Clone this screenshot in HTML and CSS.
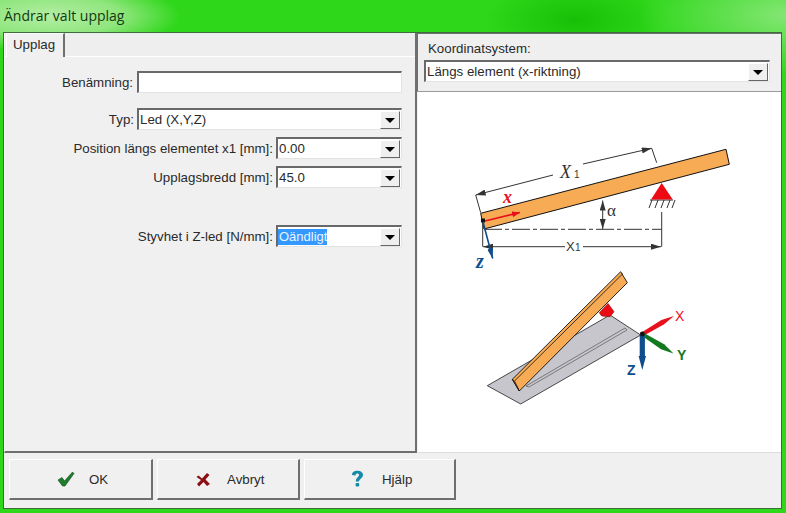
FILE: index.html
```html
<!DOCTYPE html>
<html lang="sv">
<head>
  <meta charset="utf-8" />
  <title>Ändrar valt upplag</title>
  <link rel="stylesheet" href="styles.css">
</head>
<body>
  <div class="window">
    <div class="titlebar">Ändrar valt upplag</div>
    <div class="client">
      <div class="panes">
        <div class="left">
          <div class="tabstrip"><div class="tab">Upplag</div></div>
          <div class="tabpage">
            <div class="row row-name">
              <label>Benämning:</label>
              <div class="field wide"></div>
            </div>
            <div class="row row-type">
              <label>Typ:</label>
              <div class="field wide combo"><span>Led (X,Y,Z)</span><b class="drop"></b></div>
            </div>
            <div class="row row-next">
              <label>Position längs elementet x1 [mm]:</label>
              <div class="field short combo"><span>0.00</span><b class="drop"></b></div>
            </div>
            <div class="row row-next">
              <label>Upplagsbredd [mm]:</label>
              <div class="field short combo"><span>45.0</span><b class="drop"></b></div>
            </div>
            <div class="row row-stiff">
              <label>Styvhet i Z-led [N/mm]:</label>
              <div class="field short combo"><span class="selected">Oändligt</span><b class="drop"></b></div>
            </div>
          </div>
        </div>
        <div class="right">
          <div class="coords">
            <div class="coords-label">Koordinatsystem:</div>
            <div class="field combo"><span>Längs element (x-riktning)</span><b class="drop"></b></div>
          </div>
          <div class="picture">
            <svg class="diagram" viewBox="418 92 363 361" width="363" height="361">
              <defs>
                <marker id="ah" viewBox="0 0 10 6" refX="10" refY="3" markerWidth="10" markerHeight="6" orient="auto-start-reverse" markerUnits="userSpaceOnUse">
                  <path d="M0 0L10 3L0 6z" fill="#333"/>
                </marker>
                <marker id="ar" viewBox="0 0 8 6" refX="8" refY="3" markerWidth="8" markerHeight="6" orient="auto" markerUnits="userSpaceOnUse">
                  <path d="M0 0L8 3L0 6z" fill="#e8101c"/>
                </marker>
                <marker id="ab" viewBox="0 0 10 6" refX="10" refY="3" markerWidth="10" markerHeight="6" orient="auto" markerUnits="userSpaceOnUse">
                  <path d="M0 0L10 3L0 6z" fill="#0f4d8c"/>
                </marker>
              </defs>

              <!-- upper sketch -->
              <polygon points="480.7,213.3 726,149.3 729.3,164.3 484,229" fill="#f7ab55" stroke="#111" stroke-width="1"/>
              <g stroke="#333" stroke-width="1" fill="none">
                <path d="M475.7 195L480.7 212.7M651.7 148.3L656.7 162.7"/>
                <path d="M553 175L475.7 195" marker-end="url(#ah)"/>
                <path d="M583 164L651.7 148.3" marker-end="url(#ah)"/>
                <path d="M482.7 222V246.7M661.7 212V246.7"/>
                <path d="M484 229.3H661.7" stroke-dasharray="18 3 4 3"/>
                <path d="M565 246.7H483" marker-end="url(#ah)"/>
                <path d="M583 246.7H661" marker-end="url(#ah)"/>
                <path d="M602.7 215V200.5" marker-end="url(#ah)"/>
                <path d="M602.7 215V229" marker-end="url(#ah)"/>
                <path d="M650 200H673M652 200L649 208M658 200L655 208M664 200L661 208M670 200L667 208M675 200L672 208"/>
              </g>
              <polygon points="661.7,183 651,199.5 672.7,199.5" fill="#ee0a12"/>
              <path d="M485 221L520 212.5" stroke="#e8101c" stroke-width="1.6" marker-end="url(#ar)"/>
              <rect x="481" y="218.5" width="4" height="4" fill="#111"/>
              <path d="M483 222L492.7 258.5" stroke="#0f4d8c" stroke-width="1.6" marker-end="url(#ab)"/>
              <text class="t-serif-x" x="560" y="178">X</text>
              <text class="t-sub" x="574" y="178">1</text>
              <text class="t-x" x="503" y="203">x</text>
              <text class="t-z" x="476" y="268">z</text>
              <text class="t-alpha" x="607" y="216">α</text>
              <text class="t-dim" x="566" y="251">X</text>
              <text class="t-sub" x="575" y="251">1</text>

              <!-- lower sketch -->
              <polygon points="487.3,385.7 610,315 640.7,335 520.7,404" fill="#c6c6cc" stroke="#222" stroke-width="0.8"/>
              <polygon points="526,386 625,328 627,330 529,387" fill="#c6c6cc" stroke="#666" stroke-width="0.8"/>
              <polygon points="599.3,312.7 608,303.5 614,311.7 610,316.7 601.7,316" fill="#ee0a12" stroke="#7a0a0a" stroke-width="0.6"/>
              <polygon points="512.3,379.3 620.7,271.7 627.3,282.7 519.3,391" fill="#f7ab55" stroke="#111" stroke-width="0.9"/>
              <path d="M514.5 381L623 273.5" stroke="#111" stroke-width="0.8"/>
              <polygon points="512.3,379.3 514.5,381 519.3,391" fill="#c9822f" stroke="#111" stroke-width="0.8"/>
              <polygon points="643,336 641.5,332.5 661.4,320.1 674,316 663.8,324.5" fill="#e8101c"/>
              <polygon points="641.5,335.5 643,332.5 664.2,344.2 673.5,353.5 661,349.2" fill="#127a1e"/>
              <polygon points="639.7,335 644.9,335 644.9,356 646,356 642.3,370 638.6,356 639.7,356" fill="#0f4d8c"/>
              <circle cx="642.3" cy="334" r="2.4" fill="#111"/>
              <text class="t-axis t-red" x="675" y="321">X</text>
              <text class="t-axis t-green" x="677" y="360">Y</text>
              <text class="t-axis t-blue" x="627" y="375">Z</text>
            </svg>
          </div>
        </div>
      </div>
      <div class="footer">
        <button class="btn btn-ok" type="button">
          <svg width="18" height="16" viewBox="0 0 18 16"><path d="M1 9L5 6.5L7.5 10L15.5 1L17 2.5L8 15H5.5z" fill="#1d7d2c" stroke="#0e4a18" stroke-width="0.6"/></svg>
          <span>OK</span>
        </button>
        <button class="btn btn-cancel" type="button">
          <svg width="15" height="15" viewBox="0 0 15 15"><path d="M2.5 3.5L6 6.5L11 1L13.5 3L9.5 7.5L14 12L11 14L7.5 10L3 14.5L1 12L5 8L0.5 5z" fill="#8c0f14"/></svg>
          <span>Avbryt</span>
        </button>
        <button class="btn btn-help" type="button">
          <svg width="13" height="18" viewBox="0 0 13 18"><path d="M1 5C1 2 3.5 0.8 6.5 0.8C10 0.8 12 2.6 12 5C12 8 8.5 8.5 8 11.5H4.8C4.8 7.5 8 7 8 5C8 4 7.4 3.5 6.3 3.5C5 3.5 4.6 4.3 4.6 5.5z" fill="#118ba8"/><rect x="4.6" y="13" width="3.6" height="3.6" rx="1" fill="#118ba8"/></svg>
          <span>Hjälp</span>
        </button>
      </div>
    </div>
  </div>
</body>
</html>
```

FILE: styles.css
```css
* {
  margin: 0;
  padding: 0;
  box-sizing: border-box;
}

html, body {
  width: 786px;
  height: 513px;
  overflow: hidden;
}

body {
  font-family: "Liberation Sans", Arial, sans-serif;
  font-size: 13.3px;
  color: #2a2a2a;
  background:
    radial-gradient(ellipse 130px 36px at 50px 16px, #b4eda4 0%, #8fe67d 55%, rgba(70, 220, 40, 0) 100%),
    radial-gradient(ellipse 150px 60px at 790px 15px, #86e676 0%, rgba(100, 225, 80, 0) 100%),
    radial-gradient(ellipse 90px 40px at 575px 20px, #17c006 0%, rgba(23, 192, 6, 0) 100%),
    #2fd71b;
}

.window {
  width: 786px;
  height: 513px;
  padding-left: 3px;
  padding-right: 4px;
  padding-bottom: 4px;
  display: flex;
  flex-direction: column;
}

.titlebar {
  height: 32px;
  flex: none;
  padding: 7px 0 0 1px;
  font-family: "Open Sans", sans-serif;
  font-size: 14px;
  line-height: 18px;
  color: #123a10;
}

.client {
  flex: 1;
  display: flex;
  flex-direction: column;
  background: #f0f0f0;
  border: 1px solid #3f6b3a;
}

.panes {
  display: flex;
  height: 420px;
  flex: none;
}

.left {
  width: 413px;
  flex: none;
  display: flex;
  flex-direction: column;
  border-right: 2px solid #6f6f6f;
  border-bottom: 2px solid #6f6f6f;
  border-left: 1px solid #ffffff;
}

.tabstrip {
  height: 24px;
  flex: none;
  padding-left: 1px;
  background: #eeeeee;
  border-bottom: 1px solid #ffffff;
}

.tab {
  width: 59px;
  height: 24px;
  padding: 3px 0 0 6px;
  background: #f0f0f0;
  border-top: 1px solid #ffffff;
  border-left: 1px solid #ffffff;
  border-right: 2px solid #6f6f6f;
  line-height: 15px;
}

.tabpage {
  flex: 1;
  padding-top: 14px;
  padding-right: 13px;
}

.row {
  display: flex;
  justify-content: flex-end;
  align-items: center;
  height: 22px;
  gap: 3px;
}

.row label {
  white-space: nowrap;
  padding-top: 1px;
}

.row-name {
  gap: 4px;
}

.row-type {
  margin-top: 15px;
}

.row-next {
  margin-top: 7px;
}

.row-stiff {
  margin-top: 37px;
}

.field {
  height: 22px;
  background: #ffffff;
  border-top: 2px solid #696969;
  border-left: 2px solid #696969;
  border-right: 1px solid #e3e3e3;
  border-bottom: 1px solid #e3e3e3;
  display: flex;
  align-items: center;
  justify-content: space-between;
  line-height: 16px;
}

.wide {
  width: 265px;
}

.short {
  width: 126px;
}

.combo span {
  padding-left: 1px;
}

.combo span.selected {
  background: #3399ff;
  color: #e8f3ff;
  font-size: 13px;
}

.drop {
  width: 20px;
  height: 18px;
  flex: none;
  margin: 0 1px 0 0;
  background: #efefef;
  border-top: 1px solid #ffffff;
  border-left: 1px solid #ffffff;
  border-right: 1px solid #666666;
  border-bottom: 1px solid #666666;
  position: relative;
}

.drop::after {
  content: "";
  position: absolute;
  left: 4px;
  top: 6px;
  border-left: 5px solid transparent;
  border-right: 5px solid transparent;
  border-top: 5px solid #000000;
}

.right {
  flex: 1;
  display: flex;
  flex-direction: column;
  margin-left: 1px;
}

.coords {
  height: 59px;
  flex: none;
  margin-left: -2px;
  padding: 7px 11px 0 6px;
  background: #efefef;
  border-top: 1px solid #6f6f6f;
  border-left: 2px solid #6f6f6f;
  border-bottom: 1px solid #9a9a9a;
}

.coords-label {
  height: 19px;
  padding-left: 4px;
  line-height: 16px;
}

.picture {
  flex: 1;
  background: #ffffff;
  border-bottom: 1px solid #dddddd;
  overflow: hidden;
}

.diagram {
  display: block;
}

.diagram text {
  font-family: "Liberation Sans", Arial, sans-serif;
}

.diagram .t-serif-x {
  font-family: "Liberation Serif", serif;
  font-style: italic;
  font-size: 18px;
  fill: #333333;
}

.diagram .t-sub {
  font-size: 10px;
  fill: #333333;
}

.diagram .t-x {
  font-family: "Liberation Serif", serif;
  font-style: italic;
  font-weight: bold;
  font-size: 18px;
  fill: #e8101c;
}

.diagram .t-z {
  font-family: "Liberation Serif", serif;
  font-style: italic;
  font-weight: bold;
  font-size: 20px;
  fill: #0f4d8c;
}

.diagram .t-alpha {
  font-family: "Liberation Serif", serif;
  font-size: 17px;
  fill: #333333;
}

.diagram .t-dim {
  font-size: 13px;
  fill: #333333;
}

.diagram .t-axis {
  font-size: 14px;
  font-weight: bold;
}

.diagram .t-red {
  fill: #e8101c;
  font-weight: normal;
}

.diagram .t-green {
  fill: #127a1e;
}

.diagram .t-blue {
  fill: #0f4d8c;
}

.footer {
  flex: 1;
  display: flex;
  gap: 4px;
  padding: 6px 0 0 5px;
  background: #f0f0f0;
}

.btn {
  height: 41px;
  display: flex;
  align-items: center;
  font-family: "Liberation Sans", Arial, sans-serif;
  font-size: 13.3px;
  color: #2a2a2a;
  background: #f0f0f0;
  border-top: 1px solid #ffffff;
  border-left: 1px solid #ffffff;
  border-right: 2px solid #6f6f6f;
  border-bottom: 2px solid #6f6f6f;
}

.btn-ok {
  width: 144px;
  padding-left: 47px;
  gap: 14px;
}

.btn-cancel {
  width: 143px;
  padding-left: 38px;
  gap: 16px;
}

.btn-help {
  width: 152px;
  padding-left: 46px;
  gap: 18px;
}
```
